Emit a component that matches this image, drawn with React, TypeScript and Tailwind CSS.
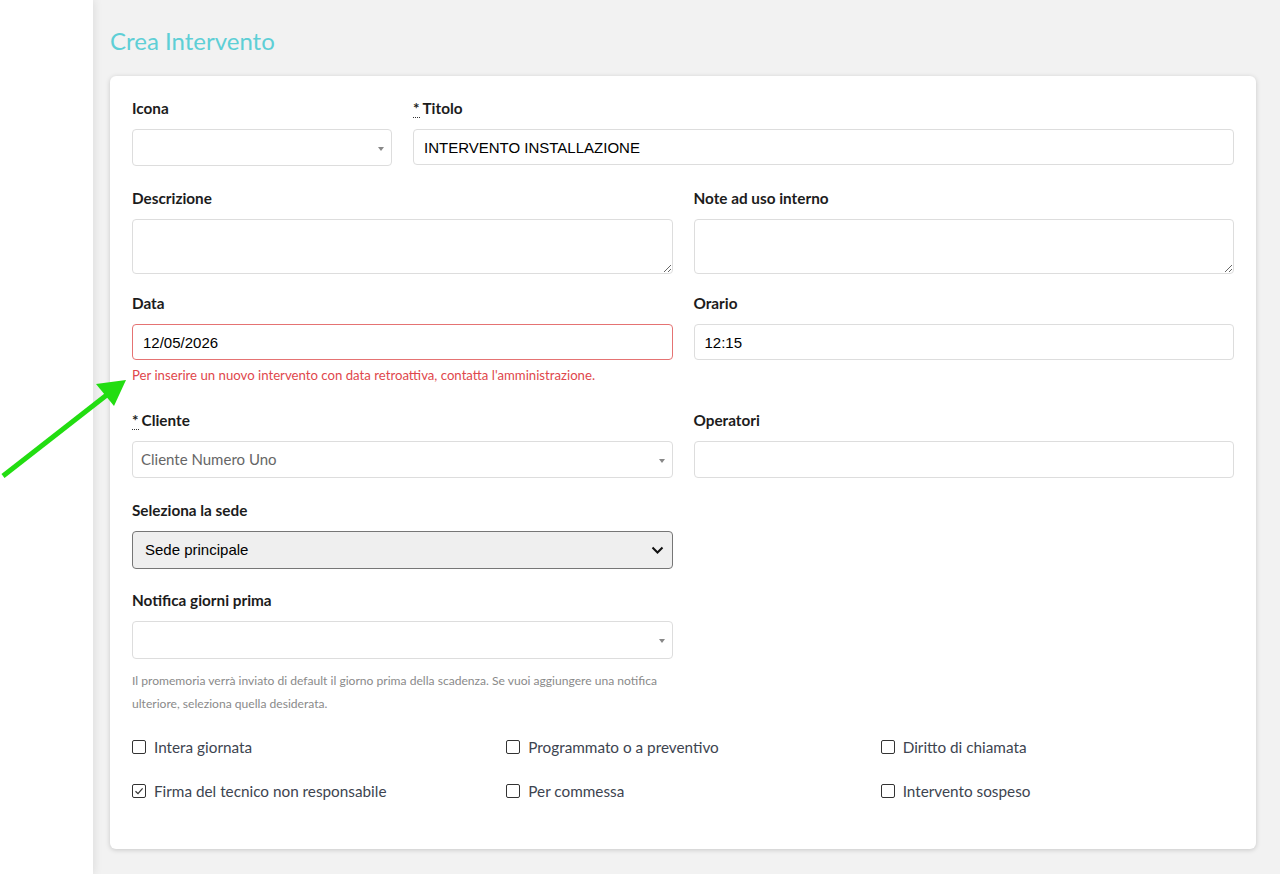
import React from 'react';

const Label: React.FC<{ text: string; required?: boolean }> = ({ text, required }) => (
  <label className="block h-[21px] leading-[21px] text-[15.3px] font-bold text-[#1c1c1c] mb-[10px]">
    {required && <abbr className="no-underline border-b border-dotted border-[#333] mr-[3px]" title="obbligatorio">*</abbr>}
    {text}
  </label>
);

// select2-style box with the tiny grey caret on the right
const FakeSelect: React.FC<{ value?: string; className?: string }> = ({ value, className }) => (
  <div className={`relative flex items-center h-[37px] bg-white border border-[#ddd] rounded-[4px] px-[8px] ${className ?? ''}`}>
    <span className="text-[15px] text-[#666]">{value}</span>
    <span className="absolute right-[7px] top-[17px] w-0 h-0 border-l-[3.5px] border-r-[3.5px] border-t-[4px] border-l-transparent border-r-transparent border-t-[#888]"></span>
  </div>
);

const TextInput: React.FC<{ value?: string; error?: boolean; className?: string }> = ({ value, error, className }) => (
  <input
    readOnly
    value={value ?? ''}
    className={`block w-full h-[36px] bg-white rounded-[4px] border px-[10px] text-[15px] text-black outline-none ${error ? 'border-[#e57373]' : 'border-[#ddd]'} ${className ?? ''}`}
    style={{ fontFamily: '"Liberation Sans", Arial, sans-serif' }}
  />
);

const Check: React.FC<{ label: string; checked?: boolean }> = ({ label, checked }) => (
  <div className="flex items-center gap-[8px] h-[20px]">
    <span className="flex items-center justify-center w-[14px] h-[14px] border border-[#333] rounded-[2px] bg-white">
      {checked && (
        <svg width="10" height="10" viewBox="0 0 10 10" fill="none">
          <path d="M1.5 5.2 L4 7.6 L8.6 2.4" stroke="#333" strokeWidth="1.2" />
        </svg>
      )}
    </span>
    <span className="text-[15.3px] text-[#3d4450]">{label}</span>
  </div>
);

export default function App() {
  return (
    <div className="relative min-h-[874px] flex bg-[#f2f2f2]" style={{ fontFamily: 'Lato, "Open Sans", sans-serif' }}>
      <aside className="w-[93px] shrink-0 bg-white shadow-[2px_0_8px_rgba(0,0,0,0.08)]"></aside>

      <main className="flex-1 pl-[17px] pr-[24px] pt-[26px] pb-[24px]">
        <h1 className="text-[24px] leading-[30px] text-[#5ecfd6] mb-[20px]">Crea Intervento</h1>

        <div className="bg-white rounded-[6px] shadow-[0_1px_5px_rgba(0,0,0,0.18)] px-[22px] pt-[22px] pb-[48px]">
          {/* Icona + Titolo */}
          <div className="flex gap-[21px] mb-[22px]">
            <div className="w-[260px]">
              <Label text="Icona" />
              <FakeSelect />
            </div>
            <div className="flex-1">
              <Label text="Titolo" required />
              <TextInput value="INTERVENTO INSTALLAZIONE" />
            </div>
          </div>

          <div className="grid grid-cols-2 gap-x-[21px] mb-[19px]">
            <div>
              <Label text="Descrizione" />
              <textarea readOnly className="block w-full h-[55px] border border-[#ddd] rounded-[4px] outline-none"></textarea>
            </div>
            <div>
              <Label text="Note ad uso interno" />
              <textarea readOnly className="block w-full h-[55px] border border-[#ddd] rounded-[4px] outline-none"></textarea>
            </div>
          </div>

          <div className="grid grid-cols-2 gap-x-[21px] mb-[26px]">
            <div>
              <Label text="Data" />
              <TextInput value="12/05/2026" error />
              <p className="mt-[7px] text-[13.2px] leading-[17px] text-[#e0474c]">
                Per inserire un nuovo intervento con data retroattiva, contatta l'amministrazione.
              </p>
            </div>
            <div>
              <Label text="Orario" />
              <TextInput value="12:15" />
            </div>
          </div>

          <div className="grid grid-cols-2 gap-x-[21px] mb-[22px]">
            <div>
              <Label text="Cliente" required />
              <FakeSelect value="Cliente Numero Uno" />
            </div>
            <div>
              <Label text="Operatori" />
              <div className="h-[37px] bg-white border border-[#ddd] rounded-[4px]"></div>
            </div>
          </div>

          <div className="grid grid-cols-2 gap-x-[21px] mb-[21px]">
            <div>
              <Label text="Seleziona la sede" />
              <div className="relative">
                <select
                  className="block w-full h-[38px] appearance-none bg-[#efefef] border border-[#767676] rounded-[4px] pl-[12px] text-[15px] text-black outline-none"
                  style={{ fontFamily: '"Liberation Sans", Arial, sans-serif' }}
                  defaultValue="principale"
                >
                  <option value="principale">Sede principale</option>
                </select>
                <svg className="absolute right-[9px] top-[13px] pointer-events-none" width="13" height="12" viewBox="0 0 13 12" fill="none">
                  <path d="M1.5 3.5 L6.5 8.5 L11.5 3.5" stroke="#111" strokeWidth="2" />
                </svg>
              </div>
            </div>
            <div></div>
          </div>

          <div className="grid grid-cols-2 gap-x-[21px] mb-[22px]">
            <div>
              <Label text="Notifica giorni prima" />
              <FakeSelect className="h-[38px]" />
              <p className="mt-[10px] text-[12.1px] leading-[23px] text-[#8a8a8a] pr-[10px]">
                Il promemoria verrà inviato di default il giorno prima della scadenza. Se vuoi aggiungere una notifica ulteriore, seleziona quella desiderata.
              </p>
            </div>
            <div></div>
          </div>

          <div className="grid grid-cols-3 gap-y-[24px]">
            <Check label="Intera giornata" />
            <div className="pl-[7px]"><Check label="Programmato o a preventivo" /></div>
            <div className="pl-[14px]"><Check label="Diritto di chiamata" /></div>
            <Check label="Firma del tecnico non responsabile" checked />
            <div className="pl-[7px]"><Check label="Per commessa" /></div>
            <div className="pl-[14px]"><Check label="Intervento sospeso" /></div>
          </div>
        </div>
      </main>

      {/* green pointer arrow */}
      <svg className="absolute left-0 top-[370px] pointer-events-none" width="140" height="110" viewBox="0 0 140 110">
        <line x1="3" y1="106" x2="108" y2="24" stroke="#22dd11" strokeWidth="5" strokeLinecap="butt" />
        <polygon points="126,10 96,14 114,36" fill="#22dd11" />
      </svg>
    </div>
  );
}
